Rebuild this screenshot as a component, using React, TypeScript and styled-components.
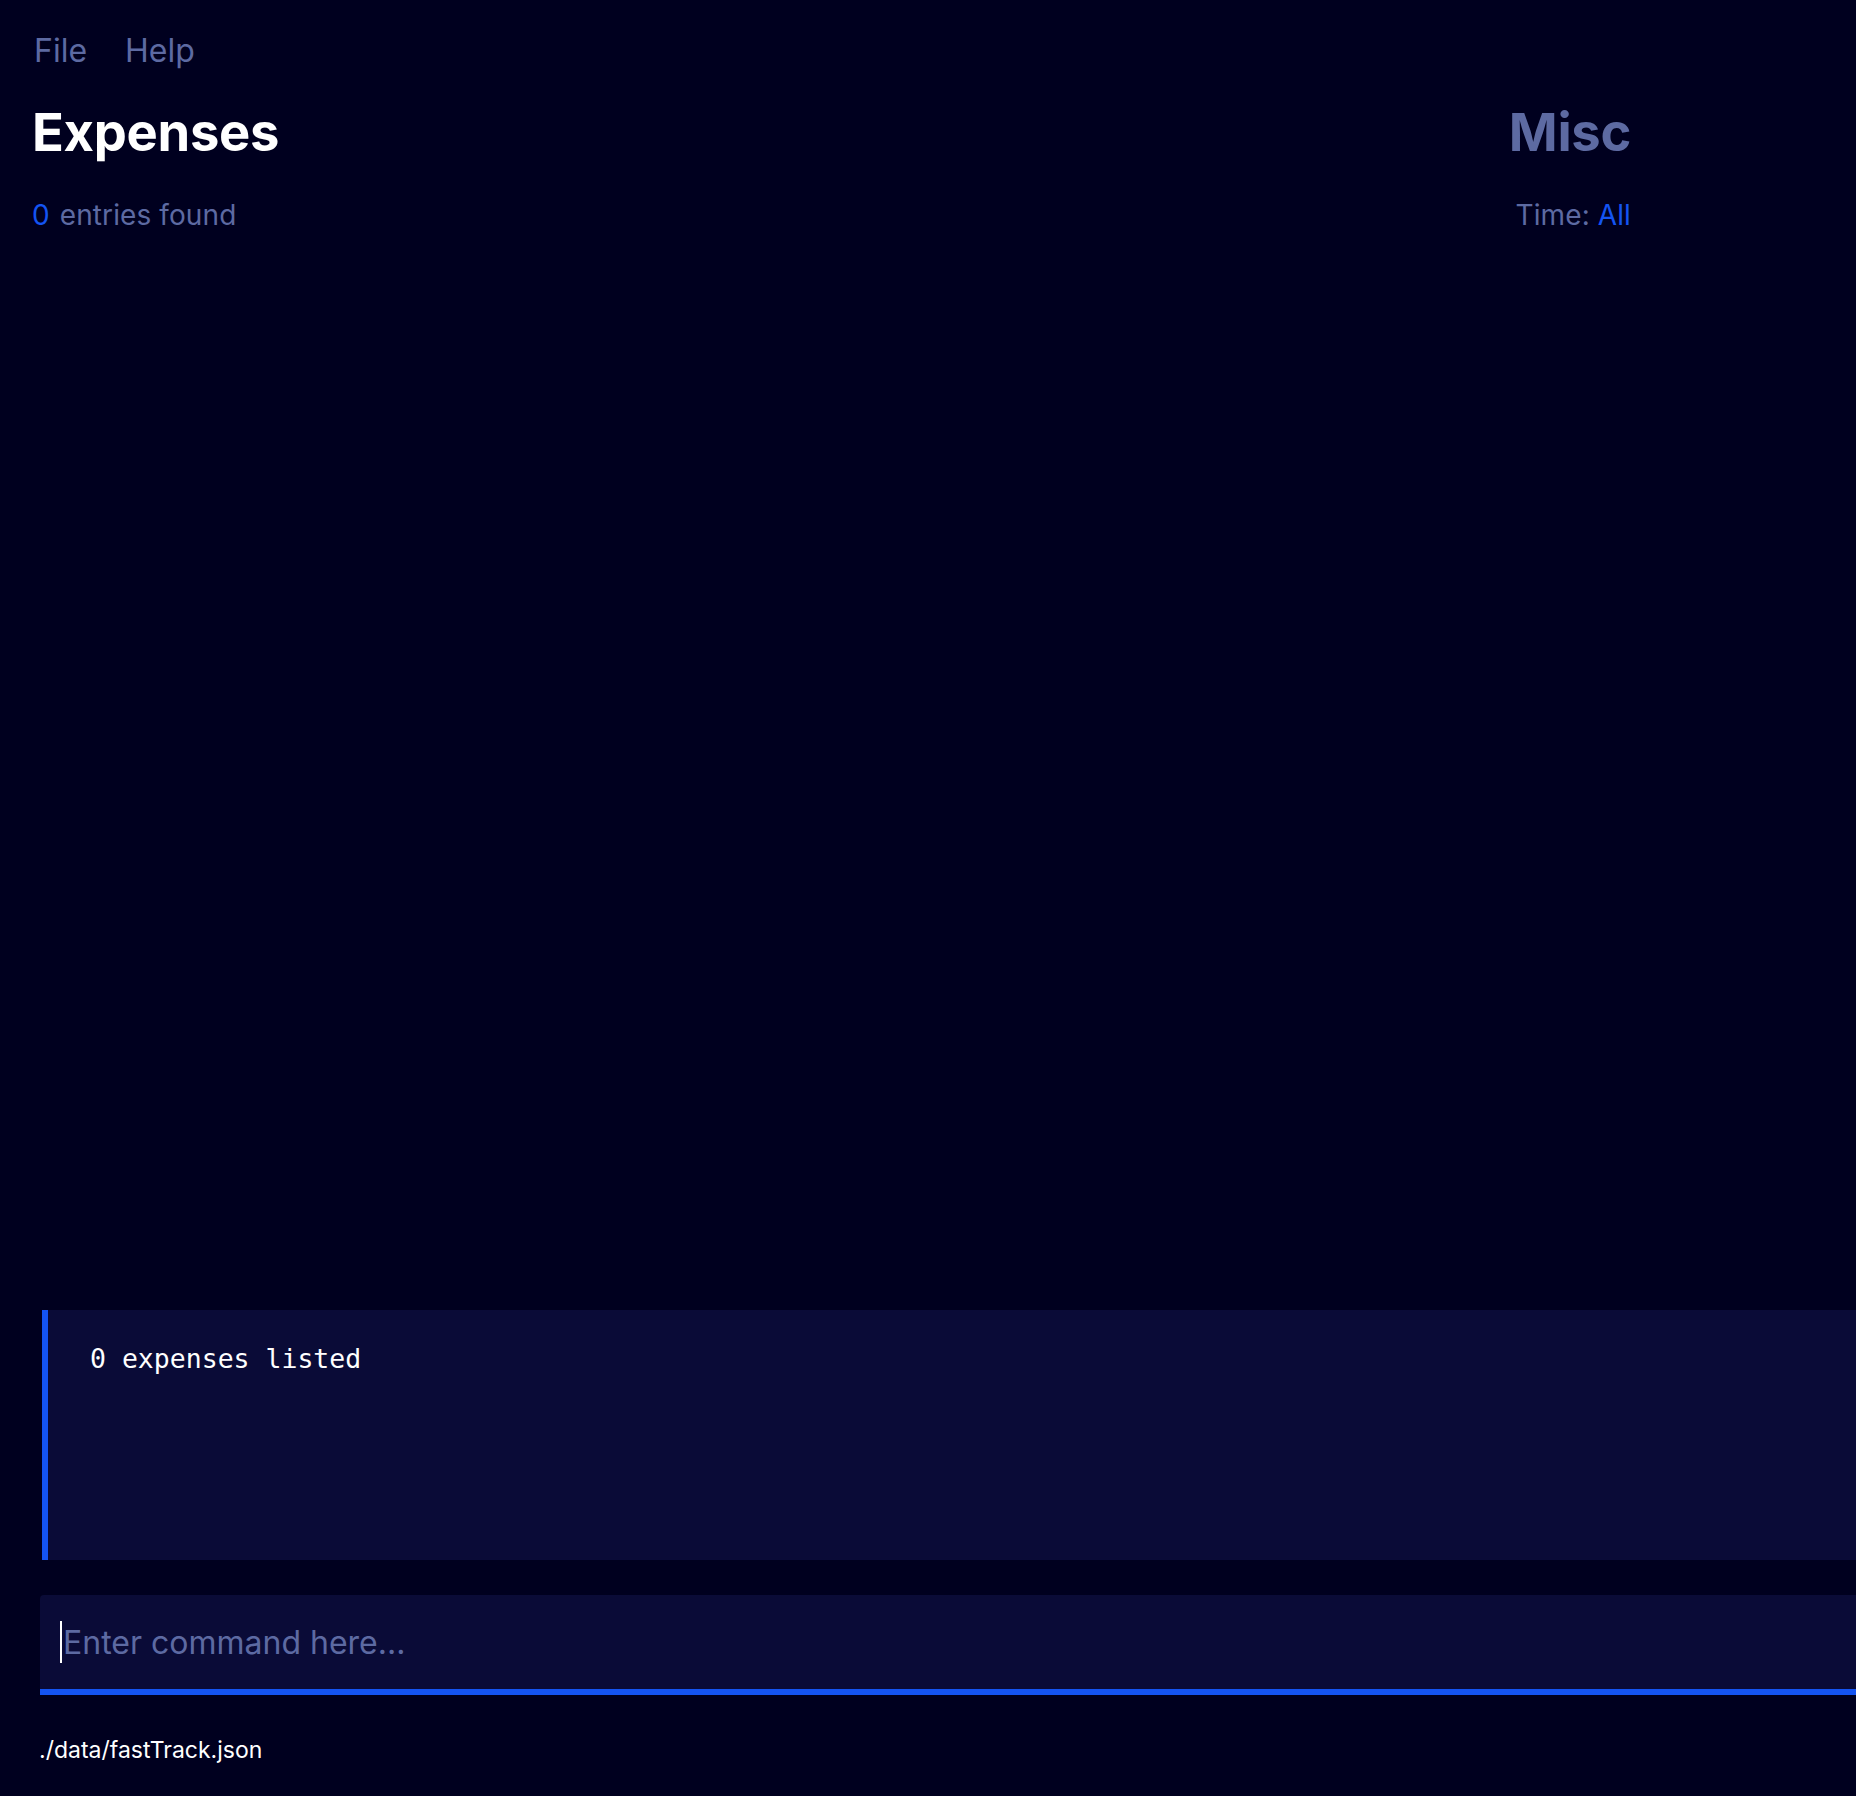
import styled, { createGlobalStyle } from "styled-components";

const GlobalStyle = createGlobalStyle`
  html, body {
    margin: 0;
    padding: 0;
    background: #00001f;
    overflow: hidden;
  }
  body {
    font-family: Inter, "Noto Sans", sans-serif;
  }
`;

const Window = styled.div`
  display: flex;
  flex-direction: column;
  height: 1796px;
  width: 100%;
  background: #00001f;
  color: #5d6aa2;
`;

const MenuBar = styled.nav`
  display: flex;
  gap: 38px;
  padding: 27px 0 0 34px;
  height: 48px;
  font-size: 32px;
  line-height: 48px;
`;

const MenuItem = styled.span`
  color: #5d6aa2;
`;

const Header = styled.header`
  display: flex;
  justify-content: space-between;
  padding: 24px 225px 0 32px;
`;

const Column = styled.div<{ $align?: string }>`
  display: flex;
  flex-direction: column;
  align-items: ${(p) => p.$align ?? "flex-start"};
`;

const Title = styled.h1<{ $muted?: boolean }>`
  margin: 0;
  font-size: 52.5px;
  font-weight: 700;
  line-height: 66px;
  letter-spacing: -0.3px;
  color: ${(p) => (p.$muted ? "#5d6aa2" : "#ffffff")};
`;

const Sub = styled.div`
  margin-top: 30px;
  font-size: 28px;
  line-height: 40px;
  letter-spacing: 0.1px;
  color: #5d6aa2;
`;

const Accent = styled.span<{ $gap?: boolean }>`
  color: #1454f2;
  margin-right: ${(p) => (p.$gap ? "2px" : "0")};
`;

const Spacer = styled.div`
  flex: 1;
`;

const ResultBox = styled.div`
  margin-left: 42px;
  height: 250px;
  box-sizing: border-box;
  background: #0a0b37;
  border-left: 6px solid #1454f2;
  padding: 31px 0 0 42px;
  font-family: "DejaVu Sans Mono", "Liberation Mono", monospace;
  font-size: 26.5px;
  line-height: 36px;
  color: #ffffff;
`;

const CommandBox = styled.div`
  margin: 35px 0 0 40px;
  height: 94px;
  background: #0a0b37;
  border-bottom: 6px solid #1454f2;
  border-top-left-radius: 4px;
  display: flex;
  align-items: center;
  padding-left: 20px;
`;

const Caret = styled.span`
  width: 2px;
  height: 42px;
  background: #ffffff;
  margin-right: 1px;
`;

const CommandInput = styled.input`
  flex: 1;
  background: transparent;
  border: none;
  outline: none;
  padding: 0;
  font-family: Inter, "Noto Sans", sans-serif;
  font-size: 32px;
  color: #ffffff;
  &::placeholder {
    color: #5d6aa2;
  }
`;

const StatusBar = styled.footer`
  box-sizing: border-box;
  padding: 39px 0 0 39px;
  height: 101px;
  font-size: 23px;
  line-height: 32px;
  color: #ffffff;
`;

export default function App() {
  return (
    <>
      <GlobalStyle />
      <Window>
        <MenuBar>
          <MenuItem>File</MenuItem>
          <MenuItem>Help</MenuItem>
        </MenuBar>
        <Header>
          <Column>
            <Title>Expenses</Title>
            <Sub>
              <Accent $gap>0</Accent> entries found
            </Sub>
          </Column>
          <Column $align="flex-end">
            <Title $muted>Misc</Title>
            <Sub>
              Time: <Accent>All</Accent>
            </Sub>
          </Column>
        </Header>
        <Spacer />
        <ResultBox>0 expenses listed</ResultBox>
        <CommandBox>
          <Caret />
          <CommandInput placeholder="Enter command here..." />
        </CommandBox>
        <StatusBar>./data/fastTrack.json</StatusBar>
      </Window>
    </>
  );
}
